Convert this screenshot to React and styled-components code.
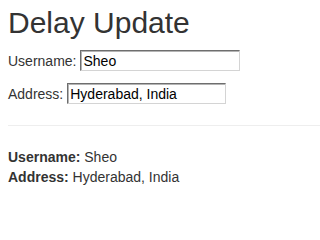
import React, { useState } from 'react'
import styled, { createGlobalStyle } from 'styled-components'

const GlobalStyle = createGlobalStyle`
  html, body {
    margin: 0;
    padding: 0;
    background: #ffffff;
  }
  body {
    font-family: "Liberation Sans", Arial, sans-serif;
    font-size: 14px;
    line-height: 20px;
    color: #333333;
  }
`

const Page = styled.div`
  padding: 6px 0 0 8px;
`

const Title = styled.h2`
  margin: 0 0 11px;
  font-size: 30px;
  line-height: 33px;
  font-weight: normal;
  color: #333333;
`

const Form = styled.div`
  display: flex;
  flex-direction: column;
  gap: 12px;
`

const Row = styled.label`
  display: flex;
  align-items: center;
  gap: 4px;
  font-size: 14px;
`

const Field = styled.input`
  box-sizing: border-box;
  width: ${p => p.$width || 160}px;
  height: 21px;
  margin: 0;
  padding: 1px 2px;
  font-family: "Liberation Sans", Arial, sans-serif;
  font-size: 14px;
  color: #000000;
  background: #ffffff;
  border: 1px solid;
  border-color: #6e6e6e #d4d4d4 #d4d4d4 #6e6e6e;
  box-shadow: inset 1px 1px 0 #b4b4b4;
  outline: none;
`

const Rule = styled.hr`
  margin: 21px 0;
  border: 0;
  border-top: 1px solid #eeeeee;
`

const Summary = styled.div`
  font-size: 14px;
  line-height: 20px;
  color: #333333;

  b {
    font-weight: bold;
  }
`

const App = () => {
  const [username, setUsername] = useState('Sheo')
  const [address, setAddress] = useState('Hyderabad, India')

  return (
    <Page>
      <GlobalStyle />
      <Title>Delay Update</Title>
      <Form>
        <Row>
          Username:
          <Field value={username} onChange={e => setUsername(e.target.value)} />
        </Row>
        <Row>
          Address:
          <Field $width={159} value={address} onChange={e => setAddress(e.target.value)} />
        </Row>
      </Form>
      <Rule />
      <Summary>
        <div><b>Username:</b> {username}</div>
        <div><b>Address:</b> {address}</div>
      </Summary>
    </Page>
  )
}

export default App
